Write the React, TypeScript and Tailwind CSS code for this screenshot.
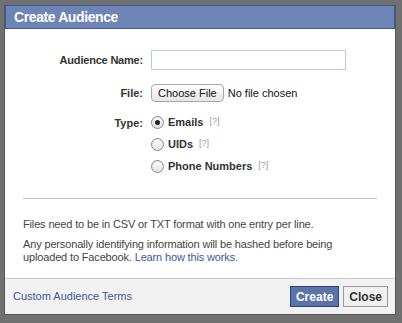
import React from "react";

function Radio({ checked }: { checked?: boolean }) {
  return (
    <span className="flex h-[13px] w-[13px] items-center justify-center rounded-full border border-[#8a8a8a] bg-gradient-to-b from-[#ffffff] to-[#e2e2e2] shadow-[inset_0_1px_1px_rgba(0,0,0,0.1)]">
      {checked ? <span className="h-[5px] w-[5px] rounded-full bg-[#222]" /> : null}
    </span>
  );
}

function RadioRow({ label, checked }: { label: string; checked?: boolean }) {
  return (
    <div className="flex h-[22px] items-center">
      <Radio checked={checked} />
      <span className="ml-[4px] text-[11px] font-bold text-[#333]">{label}</span>
      <span className="ml-[6px] text-[9px] text-[#999]">[?]</span>
    </div>
  );
}

export default function App() {
  return (
    <div
      className="h-[323px] w-[402px] overflow-hidden bg-[#707070] pl-[4px] pr-[6px] pt-[5px]"
      style={{ fontFamily: '"Liberation Sans", Arial, sans-serif' }}
    >
      <div className="flex h-[310px] w-[392px] flex-col border-x border-b border-[#555] bg-white">
        <div className="flex h-[24px] items-center border border-[#3b5998] bg-[#6d84b4] pl-[8px] text-[14px] font-bold tracking-[-0.4px] text-white">
          Create Audience
        </div>
        <div className="flex flex-1 flex-col">
          <div className="mt-[21px] grid grid-cols-[138px_1fr] items-center gap-x-[8px] text-[11px] text-[#333]">
            <div className="text-right font-bold tracking-[-0.2px]">Audience Name:</div>
            <div className="h-[20px] w-[195px] border border-[#bdc7d8] bg-white" />
            <div className="mt-[14px] text-right font-bold">File:</div>
            <div className="mt-[14px] flex items-center">
              <span className="flex h-[18px] items-center rounded-[4px] border border-[#a8a8a8] bg-gradient-to-b from-[#ffffff] to-[#e6e6e6] px-[6px] text-[11px] text-[#111]">
                Choose File
              </span>
              <span className="ml-[4px] text-[11px] text-[#111]">No file chosen</span>
            </div>
            <div className="mt-[9px] self-start pt-[4px] text-right font-bold">Type:</div>
            <div className="mt-[9px]">
              <RadioRow label="Emails" checked />
              <RadioRow label="UIDs" />
              <RadioRow label="Phone Numbers" />
            </div>
          </div>
          <div className="mx-[18px] mt-[21px] h-px bg-[#c4c4c4]" />
          <div className="mt-[19px] px-[18px] text-[11px] leading-[13px] tracking-[-0.15px] text-[#444]">
            <div>Files need to be in CSV or TXT format with one entry per line.</div>
            <div className="mt-[7px]">Any personally identifying information will be hashed before being</div>
            <div>
              uploaded to Facebook. <span className="text-[#3b5998]">Learn how this works.</span>
            </div>
          </div>
        </div>
        <div className="flex h-[36px] items-center justify-between border-t border-[#c9c9c9] bg-[#f2f2f2] pl-[8px] pr-[7px]">
          <span className="text-[11px] text-[#3b5998]">Custom Audience Terms</span>
          <div className="flex items-center gap-[4px]">
            <span className="flex h-[21px] items-center border border-[#29447e] bg-[#5b74a8] px-[5px] text-[12px] font-bold text-white">
              Create
            </span>
            <span className="flex h-[21px] items-center border border-[#999] bg-[#f0f0f0] px-[5px] text-[12px] font-bold text-[#333]">
              Close
            </span>
          </div>
        </div>
      </div>
    </div>
  );
}
